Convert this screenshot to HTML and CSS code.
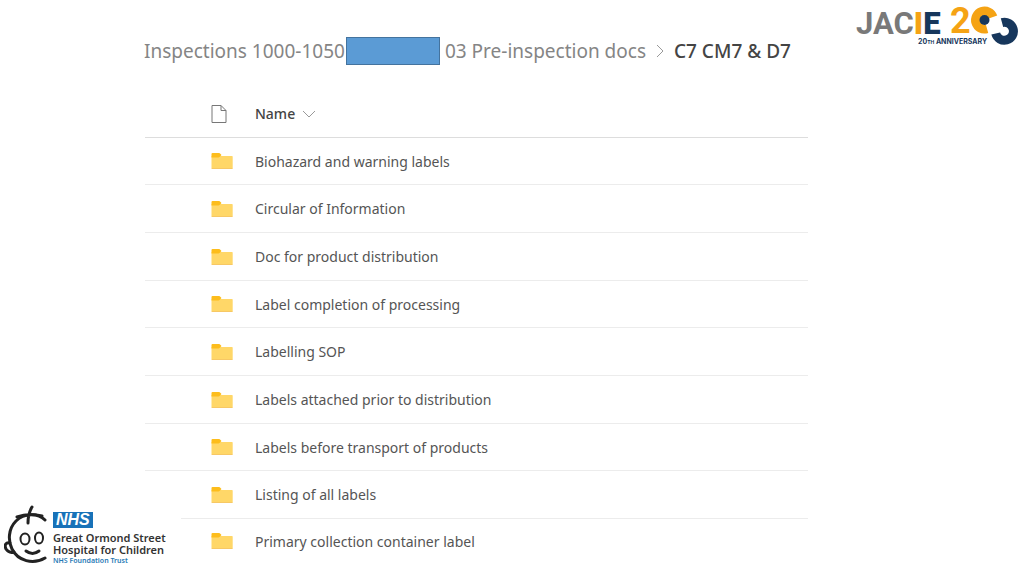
FILE: index.html
```html
<!DOCTYPE html>
<html lang="en">
<head>
<meta charset="utf-8">
<title>C7 CM7 &amp; D7</title>
<meta name="viewport" content="width=device-width, initial-scale=1">
<link rel="stylesheet" href="styles.css">
</head>
<body>
<svg class="sprite" aria-hidden="true">
  <symbol id="folder" viewBox="0 0 22 18">
    <path fill="#ffd768" d="M0.5 4H21q0.7 0 0.7 0.8V16q0 1-1 1H1.500q-1 0-1-1z"/>
    <path fill="#fdbd1c" d="M0.500 5.500V2q0-1 1-1H8q0.800 0 1.300 0.700L10.500 3 8.800 4.800q-0.600 0.700-1.500 0.700z"/>
    <path fill="#f7c865" d="M0.500 16H21.700q0 1-1 1H1.500q-1 0-1-1z"/>
  </symbol>
</svg>
<header class="top">
  <nav class="crumbs" aria-label="Breadcrumb">
    <a class="crumb" href="#">Inspections 1000-1050</a>
    <span class="redacted"></span>
    <a class="crumb" href="#">03 Pre-inspection docs</a>
    <svg class="sep" viewBox="0 0 10 16" aria-hidden="true"><path d="M2 2l6 6-6 6"/></svg>
    <span class="current" aria-current="page">C7 CM7 &amp; D7</span>
  </nav>
  <svg class="jacie" viewBox="0 -4 164 52" role="img" aria-label="JACIE 20th anniversary">
    <text class="jacie-name" x="0" y="30"><tspan fill="#797979">JAC</tspan><tspan class="jacie-i">I</tspan><tspan class="jacie-e">E</tspan></text>
    <text class="jacie-two" x="94" y="29">2</text>
    <path d="M137 13A9 9 0 1 0 131 24.700" fill="none" stroke="#f5a314" stroke-width="9"/>
    <circle cx="128.500" cy="16" r="5" fill="#17375c"/>
    <path d="M146 18.600A9 9 0 1 1 139.700 29.500" fill="none" stroke="#17375c" stroke-width="9"/>
    <text class="jacie-tag" x="62" y="40">20<tspan class="jacie-th">TH</tspan> ANNIVERSARY</text>
  </svg>
</header>
<main class="library">
  <table class="files">
    <thead>
      <tr>
        <th class="type" scope="col"><svg class="doc" viewBox="0 0 16 20" role="img" aria-label="File type"><path d="M1 1.500H10L15 6.500V18.500H1zM10 1.500V6.500H15"/></svg></th>
        <th scope="col"><button class="sort" type="button">Name<svg class="chev" viewBox="0 0 14 8" aria-hidden="true"><path d="M1 1l6 6 6-6"/></svg></button></th>
      </tr>
    </thead>
    <tbody>
      <tr><td class="type"><svg class="folder"><use href="#folder"/></svg></td><td><a href="#">Biohazard and warning labels</a></td></tr>
      <tr><td class="type"><svg class="folder"><use href="#folder"/></svg></td><td><a href="#">Circular of Information</a></td></tr>
      <tr><td class="type"><svg class="folder"><use href="#folder"/></svg></td><td><a href="#">Doc for product distribution</a></td></tr>
      <tr><td class="type"><svg class="folder"><use href="#folder"/></svg></td><td><a href="#">Label completion of processing</a></td></tr>
      <tr><td class="type"><svg class="folder"><use href="#folder"/></svg></td><td><a href="#">Labelling SOP</a></td></tr>
      <tr><td class="type"><svg class="folder"><use href="#folder"/></svg></td><td><a href="#">Labels attached prior to distribution</a></td></tr>
      <tr><td class="type"><svg class="folder"><use href="#folder"/></svg></td><td><a href="#">Labels before transport of products</a></td></tr>
      <tr><td class="type"><svg class="folder"><use href="#folder"/></svg></td><td><a href="#">Listing of all labels</a></td></tr>
      <tr><td class="type"><svg class="folder"><use href="#folder"/></svg></td><td><a href="#">Primary collection container label</a></td></tr>
    </tbody>
  </table>
</main>
<aside class="gosh">
  <svg class="face" viewBox="0 0 43 66" aria-hidden="true">
    <path d="M41 20C34 13 20 13 12 21C4 29 4 41 8 49C14 61 29 65 41 58"/>
    <path d="M6 43C2 42 0 45 2 49C4 52 7 53 10 52"/>
    <path d="M13 17C21 14 30 14 38 16M28 7C25 12 24 16 24 23"/>
    <ellipse cx="21" cy="39" rx="4.500" ry="5.500"/>
    <ellipse cx="35" cy="38" rx="4" ry="5.500"/>
    <path d="M22 51C26 54 31 54 35 51"/>
  </svg>
  <div class="gosh-text">
    <span class="nhs">NHS</span>
    <strong class="trust">Great Ormond Street<br>Hospital for Children</strong>
    <span class="foundation">NHS Foundation Trust</span>
  </div>
</aside>
</body>
</html>
```
FILE: styles.css
```css
* { box-sizing: border-box; }
body {
  position: relative;
  min-height: 100vh;
  margin: 0;
  overflow: hidden;
  background: #fff;
  color: #555;
  font-family: "Noto Sans", "Open Sans", sans-serif;
  font-size: 14px;
}
a { color: inherit; text-decoration: none; }
svg { display: block; flex: none; }
.sprite { position: absolute; width: 0; height: 0; }

.top {
  display: flex;
  justify-content: space-between;
  align-items: flex-start;
  padding: 0 4px 0 144px;
}
.crumbs {
  display: flex;
  align-items: center;
  padding-top: 36px;
  font-size: 19px;
  line-height: 30px;
  white-space: nowrap;
  color: #858585;
}
.redacted {
  width: 94px;
  height: 28px;
  margin: 0 5px 0 1px;
  background: #5b9bd5;
  border: 1px solid #44739e;
}
.sep { width: 10px; height: 16px; margin: 0 9px; }
.sep path, .chev path { fill: none; stroke: #999; stroke-width: 1; }
.current { color: #444; font-weight: 500; }

.jacie { width: 164px; height: 52px; overflow: visible; }
.jacie-name { font: 700 31px Roboto, sans-serif; }
.jacie-i, .jacie-e { font-weight: 900; }
.jacie-i { fill: #f5a314; }
.jacie-e { fill: #17375c; }
.jacie-two { font: 700 36px Roboto, sans-serif; fill: #f5a314; }
.jacie-tag { font: 700 7px Inter, sans-serif; fill: #17375c; }
.jacie-th { font-size: 5px; }

.library { padding: 24px 216px 0 145px; }
.files { width: 100%; border-collapse: separate; border-spacing: 0; }
th, td {
  height: 48px;
  padding: 0;
  text-align: left;
  vertical-align: middle;
  border-bottom: 1px solid #ececec;
}
th { border-bottom-color: #ddd; }
tbody tr:nth-child(3n+1) td { height: 47px; }
tbody tr:last-child td { height: 44px; border-bottom: 0; }
.type { width: 110px; padding-left: 66px; }
.doc { width: 16px; height: 20px; }
.doc path { fill: none; stroke: #777; stroke-width: 1; }
.folder { width: 22px; height: 18px; }
.sort {
  display: flex;
  align-items: center;
  gap: 7px;
  padding: 0;
  border: 0;
  background: none;
  color: #444;
  font: inherit;
  font-weight: 500;
}
.chev { width: 14px; height: 8px; }

.gosh {
  position: absolute;
  left: 0;
  bottom: 0;
  display: flex;
  gap: 6px;
  width: 181px;
  height: 76px;
  padding-left: 4px;
  background: #fff;
  white-space: nowrap;
}
.face { width: 43px; height: 66px; }
.face path, .face ellipse { fill: none; stroke: #222; stroke-width: 3; stroke-linecap: round; }
.face ellipse { stroke-width: 2; }
.gosh-text { display: flex; flex-direction: column; align-items: flex-start; padding-top: 12px; }
.nhs {
  padding: 0 3px;
  background: #1872b8;
  color: #fff;
  font: italic 700 16px/16px "Liberation Sans", sans-serif;
}
.trust { margin-top: 4px; color: #333; font-size: 11px; font-weight: 600; line-height: 12px; }
.foundation { color: #2779b5; font-size: 7px; font-weight: 600; line-height: 10px; }
```
